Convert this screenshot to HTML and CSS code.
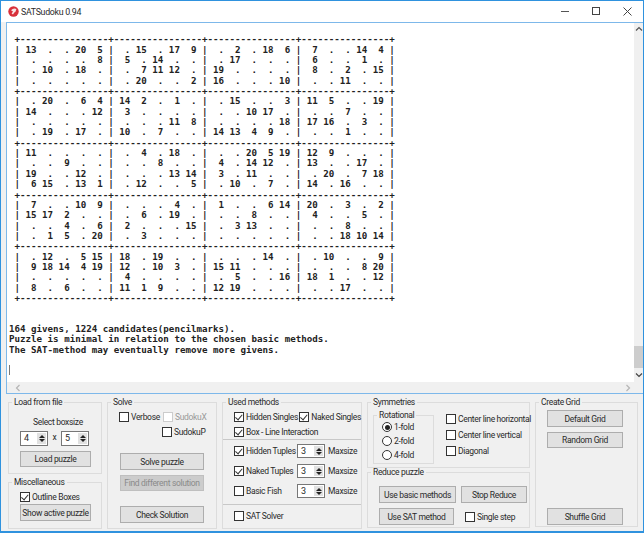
FILE: index.html
```html
<!DOCTYPE html>
<html lang="en">
<head>
    <meta charset="UTF-8">
    <title>SATSudoku 0.94</title>
    <link rel="stylesheet" href="styles.css">
</head>
<body>
<div class="window">
    <div class="titlebar">
        <svg class="app-icon" width="11" height="11" viewBox="0 0 11 11"><circle cx="5.5" cy="5.5" r="5.2" fill="#d8303a"/><path d="M3 4.2 Q5.5 1.6 8.4 3 L7.6 5.6 Q6 6.6 5 8.4 L3.6 7.6 L5 5.6 Z" fill="#f6e6e6"/></svg>
        <span class="title">SATSudoku 0.94</span>
        <div class="controls">
            <svg width="9" height="9" viewBox="0 0 9 9"><path d="M0 4.5H8" stroke="#555" fill="none"/></svg>
            <svg width="9" height="9" viewBox="0 0 9 9"><rect x="0.5" y="0.5" width="7" height="7" stroke="#444" fill="none"/></svg>
            <svg width="9" height="9" viewBox="0 0 9 9"><path d="M0.5 0.5L8.5 8.5M8.5 0.5L0.5 8.5" stroke="#444" fill="none"/></svg>
        </div>
    </div>
    <div class="console">
        <div class="console-main">
<pre class="console-text">

 +----------------+----------------+----------------+----------------+
 | 13  .  . 20  5 |  . 15  . 17  9 |  .  2  . 18  6 |  7  .  . 14  4 |
 |  .  .  .  .  8 |  5  . 14  .  . |  . 17  .  .  . |  6  .  .  1  . |
 |  . 10  . 18  . |  .  7 11 12  . | 19  .  .  .  . |  8  .  2  . 15 |
 |  .  .  .  .  . |  . 20  .  .  2 | 16  .  .  . 10 |  .  . 11  .  . |
 +----------------+----------------+----------------+----------------+
 |  . 20  .  6  4 | 14  2  .  1  . |  . 15  .  .  3 | 11  5  .  . 19 |
 | 14  .  .  . 12 |  3  .  .  .  . |  .  . 10 17  . |  .  .  7  .  . |
 |  .  .  .  .  . |  .  .  . 11  8 |  .  .  .  . 18 | 17 16  .  3  . |
 |  . 19  . 17  . | 10  .  7  .  . | 14 13  4  9  . |  .  .  1  .  . |
 +----------------+----------------+----------------+----------------+
 | 11  .  .  .  . |  .  4  . 18  . |  .  . 20  5 19 | 12  9  .  .  . |
 |  .  .  9  .  . |  .  .  8  .  . |  4  . 14 12  . | 13  .  . 17  . |
 | 19  .  . 12  . |  .  .  . 13 14 |  3  . 11  .  . |  . 20  .  7 18 |
 |  6 15  . 13  1 |  . 12  .  .  5 |  . 10  .  7  . | 14  . 16  .  . |
 +----------------+----------------+----------------+----------------+
 |  7  .  . 10  9 |  .  .  .  4  . |  1  .  .  6 14 | 20  .  3  .  2 |
 | 15 17  2  .  . |  .  6  . 19  . |  .  .  8  .  . |  4  .  .  5  . |
 |  .  .  4  .  6 |  2  .  .  . 15 |  .  3 13  .  . |  .  .  8  .  . |
 |  .  1  5  . 20 |  .  3  .  .  . |  .  .  .  .  . |  .  . 18 10 14 |
 +----------------+----------------+----------------+----------------+
 |  . 12  .  5 15 | 18  . 19  .  . |  .  .  . 14  . |  . 10  .  .  9 |
 |  9 18 14  4 19 | 12  . 10  3  . | 15 11  .  .  . |  .  .  .  8 20 |
 |  .  .  .  .  . |  4  .  .  .  . |  .  5  .  . 16 | 18  1  .  . 12 |
 |  8  .  6  .  . | 11  1  9  .  . | 12 19  .  .  . |  .  . 17  .  . |
 +----------------+----------------+----------------+----------------+


164 givens, 1224 candidates(pencilmarks).
Puzzle is minimal in relation to the chosen basic methods.
The SAT-method may eventually remove more givens.

<span class="caret"></span></pre>
            <div class="vscroll">
                <svg width="8" height="6" viewBox="0 0 8 6"><path d="M1 4.5L4 1.5L7 4.5" stroke="#555" stroke-width="1.2" fill="none"/></svg>
                <div class="thumb"></div>
                <svg width="8" height="6" viewBox="0 0 8 6"><path d="M1 1.5L4 4.5L7 1.5" stroke="#444" stroke-width="1.2" fill="none"/></svg>
            </div>
        </div>
        <div class="hscroll">
            <svg width="6" height="8" viewBox="0 0 6 8"><path d="M4.5 1L1.5 4L4.5 7" stroke="#b5b5b5" stroke-width="1.2" fill="none"/></svg>
            <svg width="6" height="8" viewBox="0 0 6 8"><path d="M1.5 1L4.5 4L1.5 7" stroke="#b5b5b5" stroke-width="1.2" fill="none"/></svg>
        </div>
    </div>
    <div class="panels">
        <div class="col col-load">
            <fieldset class="group group-load">
                <legend>Load from file</legend>
                <div class="boxsize-label">Select boxsize</div>
                <div class="boxsize">
                    <span class="spin"><span class="spin-value">4</span><span class="spin-arrows"><i class="up"></i><i class="down"></i></span></span>
                    <span class="times">x</span>
                    <span class="spin"><span class="spin-value">5</span><span class="spin-arrows"><i class="up"></i><i class="down"></i></span></span>
                </div>
                <button class="btn btn-load">Load puzzle</button>
            </fieldset>
            <fieldset class="group group-misc">
                <legend>Miscellaneous</legend>
                <label class="check"><span class="box checked"></span>Outline Boxes</label>
                <button class="btn btn-active">Show active puzzle</button>
            </fieldset>
        </div>

        <fieldset class="group group-solve">
            <legend>Solve</legend>
            <div class="solve-row">
                <label class="check check-verbose"><span class="box"></span>Verbose</label>
                <label class="check disabled"><span class="box"></span>SudokuX</label>
            </div>
            <label class="check sudokup"><span class="box"></span>SudokuP</label>
            <button class="btn btn-solve">Solve puzzle</button>
            <button class="btn btn-find" disabled>Find different solution</button>
            <button class="btn btn-check">Check Solution</button>
        </fieldset>

        <fieldset class="group group-methods">
            <legend>Used methods</legend>
            <div class="section section-singles">
                <div class="singles-row">
                    <label class="check check-hidden"><span class="box checked"></span>Hidden Singles</label>
                    <label class="check"><span class="box checked"></span>Naked Singles</label>
                </div>
                <label class="check"><span class="box checked"></span>Box - Line Interaction</label>
            </div>
            <div class="section section-tuples">
                <div class="tuple-row">
                    <label class="check"><span class="box checked"></span>Hidden Tuples</label>
                    <span class="spin spin-small"><span class="spin-value">3</span><span class="spin-arrows"><i class="up"></i><i class="down"></i></span></span>
                    <span>Maxsize</span>
                </div>
                <div class="tuple-row">
                    <label class="check"><span class="box checked"></span>Naked Tuples</label>
                    <span class="spin spin-small"><span class="spin-value">3</span><span class="spin-arrows"><i class="up"></i><i class="down"></i></span></span>
                    <span>Maxsize</span>
                </div>
                <div class="tuple-row">
                    <label class="check"><span class="box"></span>Basic Fish</label>
                    <span class="spin spin-small"><span class="spin-value">3</span><span class="spin-arrows"><i class="up"></i><i class="down"></i></span></span>
                    <span>Maxsize</span>
                </div>
            </div>
            <div class="section section-sat">
                <label class="check"><span class="box"></span>SAT Solver</label>
            </div>
        </fieldset>

        <div class="col col-reduce">
            <fieldset class="group group-sym">
                <legend>Symmetries</legend>
                <div class="sym-body">
                    <fieldset class="group group-rot">
                        <legend>Rotational</legend>
                        <label class="check"><span class="radio selected"></span>1-fold</label>
                        <label class="check"><span class="radio"></span>2-fold</label>
                        <label class="check"><span class="radio"></span>4-fold</label>
                    </fieldset>
                    <div class="sym-lines">
                        <label class="check"><span class="box"></span>Center line horizontal</label>
                        <label class="check"><span class="box"></span>Center line vertical</label>
                        <label class="check"><span class="box"></span>Diagonal</label>
                    </div>
                </div>
            </fieldset>
            <fieldset class="group group-red">
                <legend>Reduce puzzle</legend>
                <div class="red-row">
                    <button class="btn btn-basic">Use basic methods</button>
                    <button class="btn btn-stop">Stop Reduce</button>
                </div>
                <div class="red-row red-row-2">
                    <button class="btn btn-sat">Use SAT method</button>
                    <label class="check"><span class="box"></span>Single step</label>
                </div>
            </fieldset>
        </div>

        <fieldset class="group group-create">
            <legend>Create Grid</legend>
            <button class="btn btn-default">Default Grid</button>
            <button class="btn btn-random">Random Grid</button>
            <button class="btn btn-shuffle">Shuffle Grid</button>
        </fieldset>
    </div>
</div>
</body>
</html>
```

FILE: styles.css
```css
html, body {
    margin: 0;
    padding: 0;
}
body {
    font-family: Roboto, sans-serif;
    font-size: 8.5px;
    letter-spacing: -0.32px;
    color: #2a2a2a;
}
.window {
    width: 644px;
    height: 533px;
    box-sizing: border-box;
    border: 1px solid #2f92de;
    border-width: 1px 1px 2px 1px;
    background-color: #f0f0f0;
    display: flex;
    flex-direction: column;
    overflow: hidden;
}
.titlebar {
    height: 21px;
    background-color: #fff;
    display: flex;
    align-items: center;
    padding-left: 7px;
    flex: none;
}
.title {
    margin-left: 2px;
    font-size: 8.8px;
    letter-spacing: -0.3px;
}
.controls {
    margin-left: auto;
    display: flex;
    gap: 22px;
    padding-right: 11px;
}
.console {
    height: 372px;
    flex: none;
    box-sizing: border-box;
    margin-left: 5px;
    border: 1px solid #7db8ea;
    border-right: none;
    background-color: #fff;
    display: flex;
    flex-direction: column;
}
.console-main {
    flex: 1;
    display: flex;
    min-height: 0;
}
.console-text {
    flex: 1;
    margin: 0;
    padding: 1px 0 0 2px;
    font-family: "DejaVu Sans Mono", monospace;
    font-weight: bold;
    font-size: 9.17px;
    line-height: 10.35px;
    letter-spacing: 0;
    color: #222;
    overflow: hidden;
}
.caret {
    display: inline-block;
    width: 1px;
    height: 10px;
    background-color: #777;
    vertical-align: top;
}
.vscroll {
    width: 9px;
    background-color: #f0f0f0;
    display: flex;
    flex-direction: column;
    align-items: center;
    padding: 3px 0 4px;
    box-sizing: border-box;
}
.thumb {
    width: 9px;
    height: 22px;
    margin-top: auto;
    margin-bottom: 4px;
    background-color: #cdcdcd;
}
.hscroll {
    height: 11px;
    flex: none;
    background-color: #f0f0f0;
    display: flex;
    align-items: center;
    justify-content: space-between;
    padding: 0 12px 0 8px;
}

.panels {
    display: flex;
    gap: 5px;
    padding: 2px 0 0 7px;
}
.col {
    display: flex;
    flex-direction: column;
}
.col-load {
    width: 94px;
}
.col-reduce {
    width: 163px;
}
.group {
    margin: 0;
    padding: 0 0 0 var(--pad, 0px);
    min-width: 0;
    box-sizing: border-box;
    border: 1px solid #dcdcdc;
    display: flex;
    flex-direction: column;
}
.group legend {
    margin-left: calc(3px - var(--pad, 0px));
    padding: 0 2px;
    line-height: 12px;
}

.check {
    display: inline-flex;
    align-items: center;
    gap: 2px;
    height: 12px;
    white-space: nowrap;
}
.box {
    position: relative;
    display: block;
    width: 8px;
    height: 8px;
    flex: none;
    background-color: #fff;
    border: 1px solid #333;
}
.box.checked::after {
    content: "";
    position: absolute;
    left: 1.5px;
    top: 0;
    width: 3px;
    height: 5.5px;
    border: solid #333;
    border-width: 0 1px 1px 0;
    transform: rotate(40deg);
}
.check.disabled {
    color: #999;
}
.check.disabled .box {
    border-color: #ccc;
}
.radio {
    position: relative;
    display: block;
    width: 8px;
    height: 8px;
    flex: none;
    background-color: #fff;
    border: 1px solid #333;
    border-radius: 50%;
}
.radio.selected::after {
    content: "";
    position: absolute;
    left: 1.5px;
    top: 1.5px;
    width: 5px;
    height: 5px;
    border-radius: 50%;
    background-color: #222;
}

.btn {
    display: block;
    margin: 0;
    padding: 0;
    box-sizing: border-box;
    height: 17px;
    font: inherit;
    letter-spacing: inherit;
    color: #2a2a2a;
    background-color: #e1e1e1;
    border: 1px solid #adadad;
    white-space: nowrap;
}
.btn:disabled {
    color: #8a8a8a;
    background-color: #ccc;
    border-color: #bfbfbf;
}

.spin {
    display: flex;
    width: 28px;
    height: 15px;
    box-sizing: border-box;
    background-color: #fff;
    border: 1px solid #777;
}
.spin-small {
    height: 14px;
}
.spin-value {
    flex: 1;
    padding-left: 3px;
    font-size: 9px;
    line-height: 12px;
}
.spin-arrows {
    width: 9px;
    margin: 1px;
    background-color: #e1e1e1;
    display: flex;
    flex-direction: column;
    align-items: center;
    justify-content: center;
    gap: 1px;
}
.spin-arrows i {
    width: 0;
    height: 0;
    border-left: 3px solid transparent;
    border-right: 3px solid transparent;
}
.spin-arrows .up {
    border-bottom: 3px solid #222;
}
.spin-arrows .down {
    border-top: 3px solid #222;
}

.group-load {
    --pad: 11px;
    height: 78px;
}
.boxsize-label {
    margin: 8px 0 0 13px;
    line-height: 12px;
}
.boxsize {
    display: flex;
    margin-top: 3px;
}
.times {
    width: 13px;
    text-align: center;
    line-height: 13px;
}
.btn-load {
    width: 71px;
    height: 16px;
    margin-top: 5px;
}
.group-misc {
    --pad: 11px;
    height: 53px;
    margin-top: 2px;
    padding-top: 3px;
}
.btn-active {
    width: 71px;
    margin-top: 1px;
}

.group-solve {
    --pad: 11px;
    width: 110px;
    height: 133px;
    padding-top: 3px;
}
.solve-row {
    display: flex;
}
.check-verbose {
    width: 44px;
}
.sudokup {
    margin: 3px 0 0 43px;
}
.group-solve .btn {
    width: 84px;
    margin-left: 1px;
}
.btn-solve {
    margin-top: 15px;
}
.group-solve .btn-find {
    height: 16px;
    margin-top: 5px;
}
.btn-check {
    margin-top: 15px;
}

.group-methods {
    width: 140px;
    height: 133px;
}
.section {
    padding-left: 11px;
    box-sizing: border-box;
}
.section-singles {
    height: 32px;
    padding-top: 3px;
    border-bottom: 1px solid #c8c8c8;
}
.singles-row {
    display: flex;
    margin-bottom: 3px;
}
.check-hidden {
    width: 67px;
}
.section-tuples {
    height: 65px;
    padding-top: 4px;
    border-bottom: 1px solid #c8c8c8;
    display: flex;
    flex-direction: column;
    gap: 6px;
}
.tuple-row {
    display: grid;
    grid-template-columns: 60px 28px auto;
    column-gap: 3px;
    align-items: center;
}
.section-sat {
    padding-top: 5px;
}

.group-sym {
    height: 72px;
}
.sym-body {
    display: flex;
    padding-left: 5px;
    margin-top: 1px;
}
.group-rot {
    --pad: 8px;
    flex: none;
    width: 61px;
    height: 55px;
    gap: 2px;
}
.sym-lines {
    display: flex;
    flex-direction: column;
    gap: 4px;
    margin: 4px 0 0 12px;
}
.group-red {
    --pad: 11px;
    height: 62px;
    margin-top: -2px;
    padding-top: 8px;
}
.red-row {
    display: flex;
    gap: 5px;
}
.red-row-2 {
    margin-top: 5px;
    gap: 11px;
    align-items: center;
}
.btn-basic {
    width: 77px;
}
.btn-stop {
    width: 66px;
}
.btn-sat {
    width: 75px;
}

.group-create {
    --pad: 11px;
    width: 103px;
    height: 131px;
    padding-top: 2px;
    padding-bottom: 1px;
}
.group-create .btn {
    width: 76px;
}
.group-create .btn-random {
    height: 16px;
    margin-top: 5px;
}
.group-create .btn-shuffle {
    margin-top: auto;
}
```
